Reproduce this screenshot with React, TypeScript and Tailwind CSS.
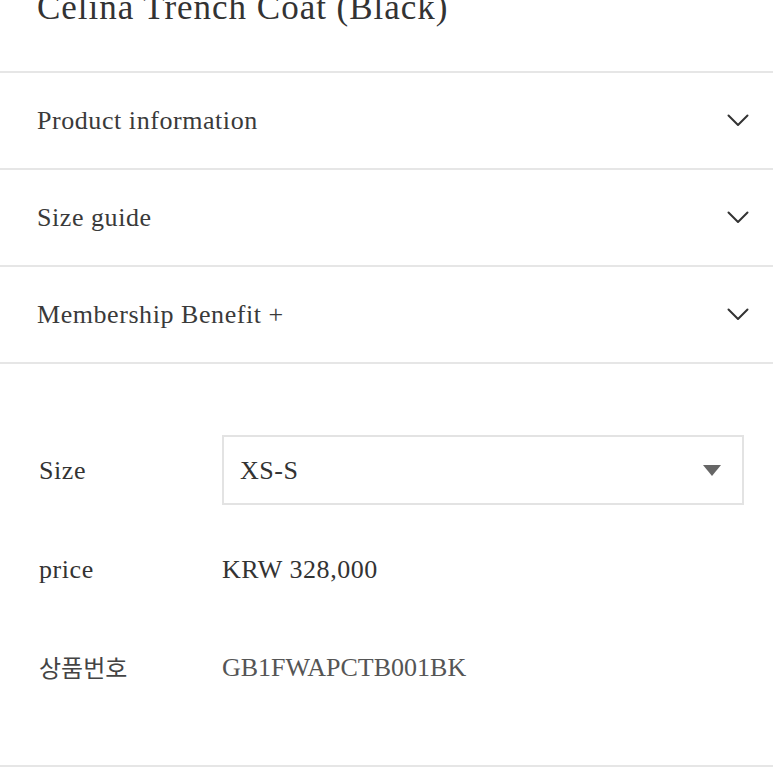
import React from 'react';

const sections = ['Product information', 'Size guide', 'Membership Benefit +'];

const Chevron = () => (
  <svg width="22" height="13" viewBox="0 0 22 13" fill="none">
    <polyline points="1.5,1.5 11,11 20.5,1.5" stroke="#333" strokeWidth="2" strokeLinecap="round" strokeLinejoin="round" />
  </svg>
);

const Caret = () => (
  <svg width="18" height="11" viewBox="0 0 18 11">
    <polygon points="0,0 18,0 9,11" fill="#666" />
  </svg>
);

const App: React.FC = () => {
  return (
    <div className="w-full min-h-screen bg-white text-[#333] font-['Liberation_Serif','Noto_Sans_CJK_KR',serif] tracking-[0.035em]">
      <div className="h-[73px] overflow-hidden border-b-2 border-[#e6e6e6] pl-[37px]">
        <h1 className="-mt-[10px] text-[35px] leading-none font-normal tracking-[0.028em] text-[#333]">Celina Trench Coat (Black)</h1>
      </div>

      {sections.map((title) => (
        <div key={title} className="h-[97px] flex items-center justify-between border-b-2 border-[#e6e6e6] pl-[37px] pr-[24px]">
          <span className="text-[26px] text-[#3a3a3a]">{title}</span>
          <Chevron />
        </div>
      ))}

      <div className="pt-[71px] pb-[64px] pl-[39px] pr-[29px] flex flex-col gap-[30px] border-b-2 border-[#e6e6e6]">
        <div className="grid grid-cols-[183px_1fr] items-center h-[70px]">
          <span className="text-[26px]">Size</span>
          <div className="h-[70px] border-2 border-[#e3e3e3] flex items-center justify-between pl-[16px] pr-[21px]">
            <span className="text-[26px]">XS-S</span>
            <Caret />
          </div>
        </div>
        <div className="grid grid-cols-[183px_1fr] items-center h-[68px]">
          <span className="text-[26px]">price</span>
          <span className="text-[26px]">KRW 328,000</span>
        </div>
        <div className="grid grid-cols-[183px_1fr] items-center h-[68px]">
          <span className="text-[24px] font-['Noto_Sans_CJK_KR',sans-serif] tracking-normal text-[#444]">상품번호</span>
          <span className="text-[26px] tracking-normal text-[#555]">GB1FWAPCTB001BK</span>
        </div>
      </div>
    </div>
  );
};

export default App;
